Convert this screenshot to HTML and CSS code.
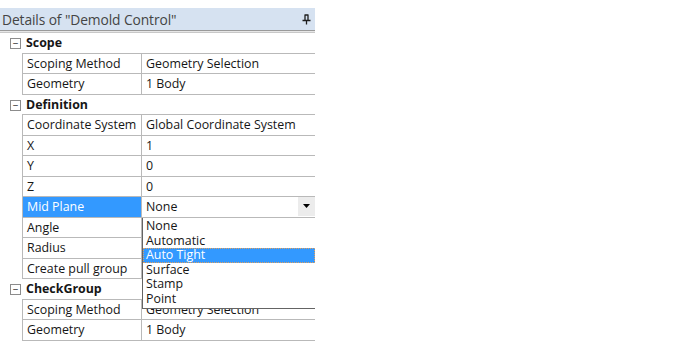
FILE: index.html
```html
<!DOCTYPE html>
<html>
<head>
<meta charset="utf-8">
<link rel="stylesheet" href="styles.css">
</head>
<body>
<div class="panel">
  <div class="header">
    <span class="title">Details of "Demold Control"</span>
    <svg class="pin" width="9" height="11" viewBox="0 0 9 11"><path d="M2.5 1h4M3 1v5M6 1v5M0.5 6.5h8M4.5 6.5v4" stroke="#1e1e1e" stroke-width="1.3" fill="none"/></svg>
  </div>
  <div class="rule"></div>
  <div class="grid">
    <div class="cat"><span class="box">−</span><span class="catlabel">Scope</span></div>
    <div class="row"><div class="k">Scoping Method</div><div class="v">Geometry Selection</div></div>
    <div class="row"><div class="k">Geometry</div><div class="v">1 Body</div></div>
    <div class="cat"><span class="box">−</span><span class="catlabel">Definition</span></div>
    <div class="row"><div class="k">Coordinate System</div><div class="v">Global Coordinate System</div></div>
    <div class="row"><div class="k">X</div><div class="v">1</div></div>
    <div class="row"><div class="k">Y</div><div class="v">0</div></div>
    <div class="row"><div class="k">Z</div><div class="v">0</div></div>
    <div class="row sel"><div class="k">Mid Plane</div><div class="v combo"><span>None</span><span class="btn"><svg width="8" height="5" viewBox="0 0 8 5"><path d="M0 0h7l-3.5 4z" fill="#000"/></svg></span></div></div>
    <div class="row"><div class="k">Angle</div><div class="v"></div></div>
    <div class="row"><div class="k">Radius</div><div class="v"></div></div>
    <div class="row"><div class="k">Create pull group</div><div class="v"></div></div>
    <div class="cat"><span class="box">−</span><span class="catlabel">CheckGroup</span></div>
    <div class="row"><div class="k">Scoping Method</div><div class="v">Geometry Selection</div></div>
    <div class="row"><div class="k">Geometry</div><div class="v">1 Body</div></div>
    <ul class="list">
      <li>None</li>
      <li>Automatic</li>
      <li class="hl">Auto Tight</li>
      <li>Surface</li>
      <li>Stamp</li>
      <li>Point</li>
    </ul>
  </div>
</div>
</body>
</html>
```
FILE: styles.css
```css
html, body {
  margin: 0;
  padding: 0;
  background: #fff;
}
body {
  font-family: "Open Sans", "Noto Sans", sans-serif;
  font-size: 12.4px;
  color: #161616;
}
.panel {
  width: 315px;
  padding-top: 8px;
}
.header {
  height: 22px;
  background: #d6e2f1;
  display: flex;
  align-items: center;
  justify-content: space-between;
  padding: 0 4px 0 2px;
}
.title {
  font-size: 13.8px;
  color: #444;
  letter-spacing: -0.1px;
}
.rule {
  height: 1px;
  border-top: 1px solid #9a9a9a;
  border-bottom: 1px solid #c8c8c8;
  background: #e6e6e6;
}
.grid {
  position: relative;
}
.cat {
  height: 20.5px;
  display: flex;
  align-items: center;
  border-bottom: 1px solid #b9b9b9;
  box-sizing: border-box;
  margin-left: 22px;
  position: relative;
}
.box {
  position: absolute;
  left: -12px;
  top: 5px;
  width: 9px;
  height: 9px;
  border: 1px solid #8c8c8c;
  box-sizing: content-box;
  font-size: 10px;
  line-height: 8px;
  text-align: center;
  color: #222;
  background: #fff;
}
.catlabel {
  font-weight: bold;
  padding-left: 4px;
}
.row {
  height: 20.5px;
  display: flex;
  margin-left: 22px;
  border-left: 1px solid #b9b9b9;
  border-bottom: 1px solid #b9b9b9;
  box-sizing: border-box;
}
.k {
  width: 119px;
  border-right: 1px solid #b9b9b9;
  padding-left: 4px;
  box-sizing: border-box;
  display: flex;
  align-items: center;
  white-space: nowrap;
}
.v {
  flex: 1;
  padding-left: 4px;
  display: flex;
  align-items: center;
  white-space: nowrap;
}
.sel .k {
  background: #3399ff;
  color: #fff;
}
.combo {
  justify-content: space-between;
  padding-right: 0;
}
.btn {
  width: 17px;
  height: 19px;
  background: #ececec;
  display: flex;
  align-items: center;
  justify-content: center;
}
.list {
  position: absolute;
  left: 142px;
  top: 185px;
  width: 173px;
  margin: 0;
  padding: 1px 0 1px 0;
  list-style: none;
  background: #fff;
  border-left: 1px solid #646464;
  border-bottom: 1px solid #646464;
  box-sizing: border-box;
}
.list li {
  height: 14.6px;
  line-height: 14.6px;
  padding-left: 3px;
  color: #161616;
}
.list li.hl {
  background: #3399ff;
  color: #fff;
  outline: 1px dotted #e0a060;
  outline-offset: -1px;
}
```
